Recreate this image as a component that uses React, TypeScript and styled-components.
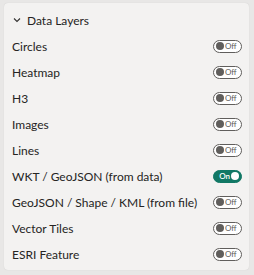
import styled, {createGlobalStyle} from 'styled-components';

const GlobalStyle = createGlobalStyle`
  body {
    margin: 0;
    background: #e8e7e6;
    font-family: Lato, "Open Sans", sans-serif;
  }
`;

const layers = [
  {name: 'Circles', on: false},
  {name: 'Heatmap', on: false},
  {name: 'H3', on: false},
  {name: 'Images', on: false},
  {name: 'Lines', on: false},
  {name: 'WKT / GeoJSON (from data)', on: true},
  {name: 'GeoJSON / Shape / KML (from file)', on: false},
  {name: 'Vector Tiles', on: false},
  {name: 'ESRI Feature', on: false},
];

const Toggle = ({on}: {on: boolean}): JSX.Element => (
  <Switch $on={on}>
    {on ? <SwitchLabel $on>On</SwitchLabel> : null}
    <Knob $on={on}/>
    {on ? null : <SwitchLabel $on={false}>Off</SwitchLabel>}
  </Switch>
);

const App = (): JSX.Element => {
  return (
    <Page>
      <GlobalStyle/>
      <Panel>
        <Header>
          <svg width="8" height="6" viewBox="0 0 8 6">
            <path d="M1 1.5 L4 4.5 L7 1.5" fill="none" stroke="#323130" strokeWidth="1.1"/>
          </svg>
          <Title>Data Layers</Title>
        </Header>
        <List>
          {layers.map((el) => (
            <Row key={el.name}>
              <Label>{el.name}</Label>
              <Toggle on={el.on}/>
            </Row>
          ))}
        </List>
      </Panel>
      <Scroll/>
    </Page>
  );
};

export default App;

const Page = styled.div`
  display: flex;
  width: 254px;
  height: 275px;
  padding: 3px 0 5px 4px;
  box-sizing: border-box;
`;

const Panel = styled.section`
  flex: 1;
  background: #f3f2f1;
  border-radius: 4px;
  box-shadow: 0 0 1px rgba(0, 0, 0, 0.15);
  padding: 8px 7px 0 8px;
`;

const Scroll = styled.div`
  width: 5px;
  flex: none;
`;

const Header = styled.div`
  display: flex;
  align-items: center;
  gap: 6px;
  height: 18px;
  padding-left: 1px;
`;

const Title = styled.h3`
  margin: 0;
  font-size: 12px;
  font-weight: 400;
  color: #252423;
`;

const List = styled.div`
  display: flex;
  flex-direction: column;
  padding-top: 4px;
`;

const Row = styled.div`
  display: flex;
  align-items: center;
  justify-content: space-between;
  height: 26px;
`;

const Label = styled.span`
  font-size: 12px;
  color: #252423;
`;

const Switch = styled.div<{$on: boolean}>`
  display: flex;
  align-items: center;
  gap: 1px;
  box-sizing: border-box;
  width: 29px;
  height: 13px;
  padding: 0 2px;
  border-radius: 7px;
  border: 1px solid ${(p) => (p.$on ? '#117865' : '#605e5c')};
  background: ${(p) => (p.$on ? '#117865' : '#ffffff')};
  justify-content: ${(p) => (p.$on ? 'flex-end' : 'flex-start')};
`;

const Knob = styled.span<{$on: boolean}>`
  width: 8px;
  height: 8px;
  border-radius: 50%;
  background: ${(p) => (p.$on ? '#ffffff' : '#605e5c')};
`;

const SwitchLabel = styled.span<{$on: boolean}>`
  font-size: 8px;
  line-height: 8px;
  color: ${(p) => (p.$on ? '#ffffff' : '#605e5c')};
  font-weight: ${(p) => (p.$on ? 600 : 400)};
`;
